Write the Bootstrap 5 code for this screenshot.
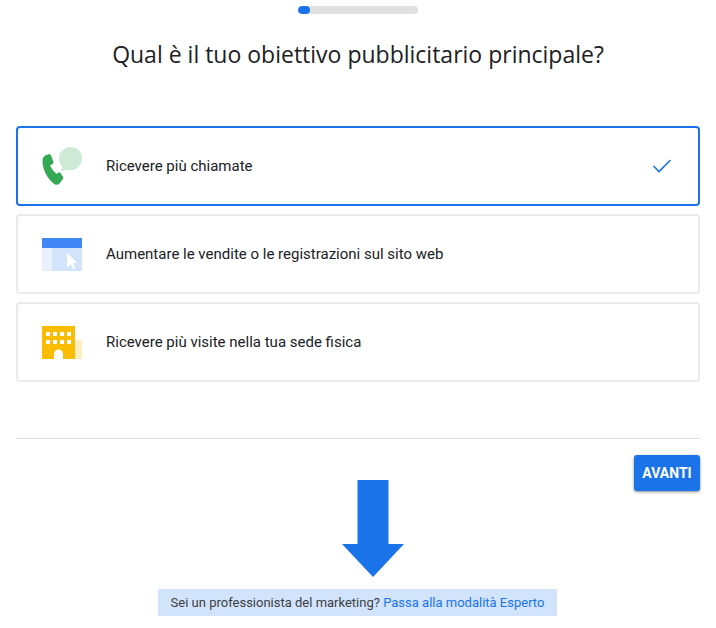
<!DOCTYPE html>
<html lang="it">
<head>
  <title>Obiettivo pubblicitario</title>
  <meta charset="UTF-8" />
  <meta name="viewport" content="width=device-width, initial-scale=1.0" />
  <link href="https://cdn.jsdelivr.net/npm/bootstrap@5.3.0/dist/css/bootstrap.min.css" rel="stylesheet">
  <style>
    body {
      background-color: #fff;
      font-family: Roboto, "Liberation Sans", sans-serif;
      color: #202124;
    }

    .page-wrap {
      padding: 6px 16px 0;
    }

    .step-track {
      width: 120px;
      height: 8px;
      margin: 0 auto;
      background-color: #e0e0e0;
      border-radius: 4px;
      overflow: hidden;
    }

    .step-fill {
      width: 12px;
      height: 8px;
      background-color: #1a73e8;
      border-radius: 4px;
    }

    .goal-title {
      margin: 24px 0 56px;
      font-family: "Open Sans", Roboto, sans-serif;
      font-size: 23px;
      line-height: 32px;
      font-weight: 400;
      text-align: center;
      color: #202124;
    }

    .goal-list {
      gap: 8px;
    }

    .goal-item {
      height: 80px;
      padding: 0 26px 0 24px;
      background-color: #fff;
      border: 2px solid #e8eaed;
      border-radius: 4px;
      font-size: 15px;
      color: #202124;
    }

    .goal-item.is-picked {
      border-color: #1a73e8;
    }

    .goal-icon {
      width: 42px;
      height: 36px;
      margin-right: 22px;
      flex-shrink: 0;
      overflow: visible;
    }

    .foot-area {
      margin-top: 56px;
      border-top: 1px solid #e0e0e0;
      padding-top: 16px;
    }

    .next-btn {
      width: 66px;
      height: 36px;
      padding: 0;
      font-size: 14px;
      font-weight: 700;
      color: #fff;
      background-color: #1a73e8;
      border: none;
      border-radius: 3px;
      box-shadow: 0 1px 3px rgba(60, 64, 67, .6);
    }

    .big-arrow {
      top: 41px;
      left: 326px;
    }

    .expert-note {
      width: 399px;
      height: 27px;
      margin: 98px auto 0 142px;
      background-color: #d2e3fc;
      font-size: 13px;
      color: #3c4043;
    }

    .expert-note a {
      color: #1a73e8;
      text-decoration: none;
    }
  </style>
</head>
<body>
  <div class="page-wrap">
    <div class="step-track"><div class="step-fill"></div></div>

    <h1 class="goal-title">Qual è il tuo obiettivo pubblicitario principale?</h1>

    <div class="goal-list d-flex flex-column">
      <div class="goal-item is-picked d-flex align-items-center">
        <svg class="goal-icon" viewBox="0 0 42 36">
          <circle cx="28.500" cy="10.500" r="11.500" fill="#ceead6"/>
          <path d="M18 22.500c1.500-.8 2.200-2.500 2.500-5l5 4.500c-2.500.7-5 1.200-7.500.5z" fill="#ceead6"/>
          <path d="M3 7.500L7 6Q8.500 6 9 7.500L11.500 14Q11.500 15.500 10.500 16L8 17.500Q10 22 14.500 26L16.500 24.500Q17.500 24 18.500 25L21 29Q21.500 30.500 20.500 31.500L17.500 35.500Q15.500 37.500 13 36.500C6 32 0 21 .5 12Q.5 9 3 7.500z" fill="#34a853"/>
        </svg>
        <span class="flex-grow-1">Ricevere più chiamate</span>
        <svg width="20" height="16" viewBox="0 0 20 16"><path d="M1.500 8l5.500 5.500L18.500 2" fill="none" stroke="#1a73e8" stroke-width="1.600"/></svg>
      </div>

      <div class="goal-item d-flex align-items-center">
        <svg class="goal-icon" viewBox="0 0 42 36">
          <rect x="0" y="2" width="40" height="33" fill="#d2e3fc"/>
          <rect x="0" y="12" width="10" height="23" fill="#e8f0fe"/>
          <rect x="0" y="2" width="40" height="10" fill="#4285f4"/>
          <path d="M25 17l10.500 10-4.500.3 2.700 5.200-2.200 1-2.500-5.200-4 3.200z" fill="#fff"/>
        </svg>
        <span class="flex-grow-1">Aumentare le vendite o le registrazioni sul sito web</span>
      </div>

      <div class="goal-item d-flex align-items-center">
        <svg class="goal-icon" viewBox="0 0 42 36">
          <rect x="33" y="16" width="7" height="19" fill="#feefc3"/>
          <rect x="0" y="2" width="33" height="33" fill="#fbbc04"/>
          <g fill="#fff">
            <rect x="4" y="8" width="4" height="4"/>
            <rect x="11" y="8" width="4" height="4"/>
            <rect x="18" y="8" width="4" height="4"/>
            <rect x="25" y="8" width="4" height="4"/>
            <rect x="4" y="16" width="4" height="4"/>
            <rect x="11" y="16" width="4" height="4"/>
            <rect x="18" y="16" width="4" height="4"/>
            <rect x="25" y="16" width="4" height="4"/>
            <path d="M12 35v-5a4.500 4.500 0 0 1 9 0v5z"/>
          </g>
        </svg>
        <span class="flex-grow-1">Ricevere più visite nella tua sede fisica</span>
      </div>
    </div>

    <div class="foot-area position-relative">
      <div class="d-flex justify-content-end">
        <button type="button" class="btn next-btn">AVANTI</button>
      </div>

      <svg class="big-arrow position-absolute" width="62" height="97" viewBox="0 0 62 97">
        <path d="M15.500 0h31v64H62L31 97 0 64h15.500z" fill="#1a73e8"/>
      </svg>

      <div class="expert-note d-flex align-items-center justify-content-center">
        <span>Sei un professionista del marketing?&nbsp;<a href="#">Passa alla modalità Esperto</a></span>
      </div>
    </div>
  </div>

  <script src="https://cdn.jsdelivr.net/npm/bootstrap@5.3.0/dist/js/bootstrap.bundle.min.js"></script>
</body>
</html>
